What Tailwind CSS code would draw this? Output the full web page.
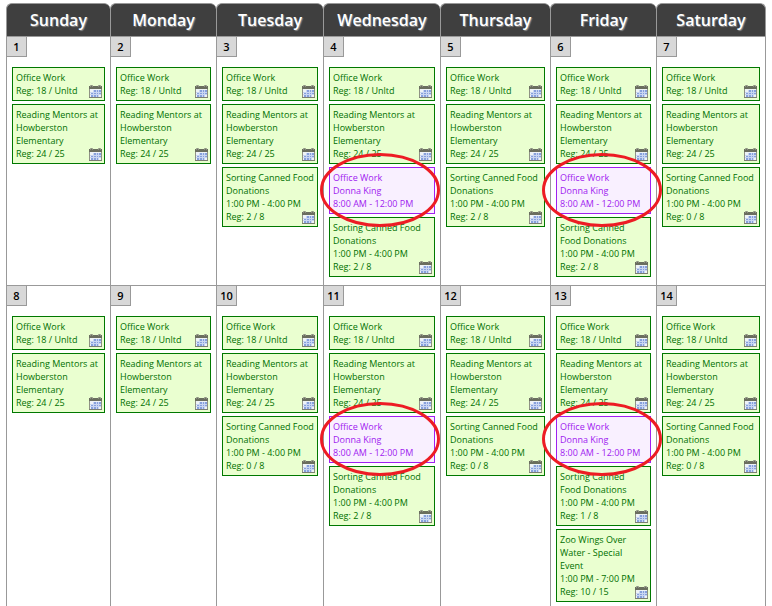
<!DOCTYPE html>
<html lang="en">

<head>
    <meta charset="UTF-8">
    <meta name="viewport" content="width=device-width, initial-scale=1.0">
    <title>Volunteer Calendar</title>
    <script src="https://cdn.jsdelivr.net/npm/@tailwindcss/browser@4"></script>
</head>

<body class="bg-white font-['Open_Sans',sans-serif]">
    <main class="px-1.5 pt-[3px]">
        <table class="w-full table-fixed border-separate border-spacing-0">
            <colgroup>
                <col class="w-[104px]">
                <col class="w-[106px]">
                <col class="w-[107px]">
                <col class="w-[117px]">
                <col class="w-[110px]">
                <col class="w-[106px]">
                <col class="w-[110px]">
            </colgroup>
            <thead>
                <tr id="day-names"></tr>
            </thead>
            <tbody id="weeks"></tbody>
        </table>
    </main>

    <!-- calendar icon, reused by every open shift -->
    <svg class="hidden" aria-hidden="true">
        <symbol id="calendar-icon" viewBox="0 0 13 13">
            <rect x="0.5" y="2.5" width="12" height="10" fill="#eef3f6" stroke="#8f9285" />
            <rect x="0" y="1" width="13" height="3" fill="#6a6e5f" />
            <path d="M1.5 2V0.5h2V2M9.5 2V0.5h2V2" fill="none" stroke="#8f9383" />
            <path d="M5 5h2v2H5zM8 5h1v2H8zM10 5h2v2h-2zM2 8h2v1H2zM5 8h2v1H5zM8 8h1v1H8zM10 8h2v1h-2zM2 10h2v2H2zM5 10h2v2H5zM8 10h1v2H8z" fill="#86a0dc" />
            <path d="M4 5h1v7H4zM7 5h1v7H7zM9 5h1v7H9zM1 7h11v1H1zM1 9h11v1H1z" fill="#c9d6f2" />
            <path d="M0 12h13v1H0z" fill="#7b7e72" />
        </symbol>
    </svg>

    <script>
        const DAYS = ["Sunday", "Monday", "Tuesday", "Wednesday", "Thursday", "Friday", "Saturday"];

        const office = { title: "Office Work", lines: ["Reg: 18 / Unltd"] };
        const reading = { title: "Reading Mentors at Howberston Elementary", lines: ["Reg: 24 / 25"] };
        const donna = { title: "Office Work", lines: ["Donna King", "8:00 AM - 12:00 PM"], assigned: true };
        const zoo = { title: "Zoo Wings Over Water - Special Event", lines: ["1:00 PM - 7:00 PM", "Reg: 10 / 15"] };
        const sorting = (count) => ({ title: "Sorting Canned Food Donations", lines: ["1:00 PM - 4:00 PM", `Reg: ${count} / 8`] });

        const WEEKS = [
            [
                [office, reading],
                [office, reading],
                [office, reading, sorting(2)],
                [office, reading, donna, sorting(2)],
                [office, reading, sorting(2)],
                [office, reading, donna, sorting(2)],
                [office, reading, sorting(0)],
            ],
            [
                [office, reading],
                [office, reading],
                [office, reading, sorting(0)],
                [office, reading, donna, sorting(2)],
                [office, reading, sorting(0)],
                [office, reading, donna, sorting(1), zoo],
                [office, reading, sorting(0)],
            ],
        ];

        function renderEvent(event) {
            const colors = event.assigned
                ? "border-[#a020f0] bg-[#f9f0ff] text-[#a020f0]"
                : "border-[#007800] bg-[#eaffd0] text-[#007000]";
            const lines = event.lines.map(line => `<p>${line}</p>`).join("");
            const extra = event.assigned
                ? `<svg class="pointer-events-none absolute top-1/2 left-1/2 z-10 h-[74px] w-[120px] -translate-x-[62px] -translate-y-[38px]" viewBox="0 0 120 74" fill="none" aria-hidden="true">
                       <ellipse cx="60" cy="37" rx="58.5" ry="35.5" stroke="#ed1c24" stroke-width="3" />
                   </svg>`
                : `<button type="button" aria-label="Sign up" class="absolute right-0.5 bottom-0.5 cursor-pointer">
                       <svg class="block size-[13px]"><use href="#calendar-icon" /></svg>
                   </button>`;
            return `<li class="relative border px-[3px] py-[3px] ${colors}"><a href="#" class="block">${event.title}</a>${lines}${extra}</li>`;
        }

        function renderDay(events, number, last) {
            return `<td class="border-t border-l border-[#999] p-0 align-top ${last ? "border-r" : ""}">
                <div class="flex size-5 items-center justify-center border-r border-b border-[#999] bg-[#d8d8d8] text-[11px] leading-none font-semibold text-black">${number}</div>
                <ul class="flex flex-col gap-[3px] px-[5px] pt-2.5 pb-2 text-[9px] leading-[13px]">${events.map(renderEvent).join("")}</ul>
            </td>`;
        }

        document.getElementById("day-names").innerHTML = DAYS.map((day, i) =>
            `<th scope="col" class="h-[33px] rounded-t-md border-t border-l border-[#999] bg-[#3f3f3f] p-0 text-[16px] leading-none font-semibold text-white text-shadow-[1px_1px_1px_#888] ${i === 6 ? "border-r" : ""}">${day}</th>`
        ).join("");

        document.getElementById("weeks").innerHTML = WEEKS.map((week, w) =>
            `<tr>${week.map((events, d) => renderDay(events, w * 7 + d + 1, d === 6)).join("")}</tr>`
        ).join("");
    </script>
</body>

</html>
